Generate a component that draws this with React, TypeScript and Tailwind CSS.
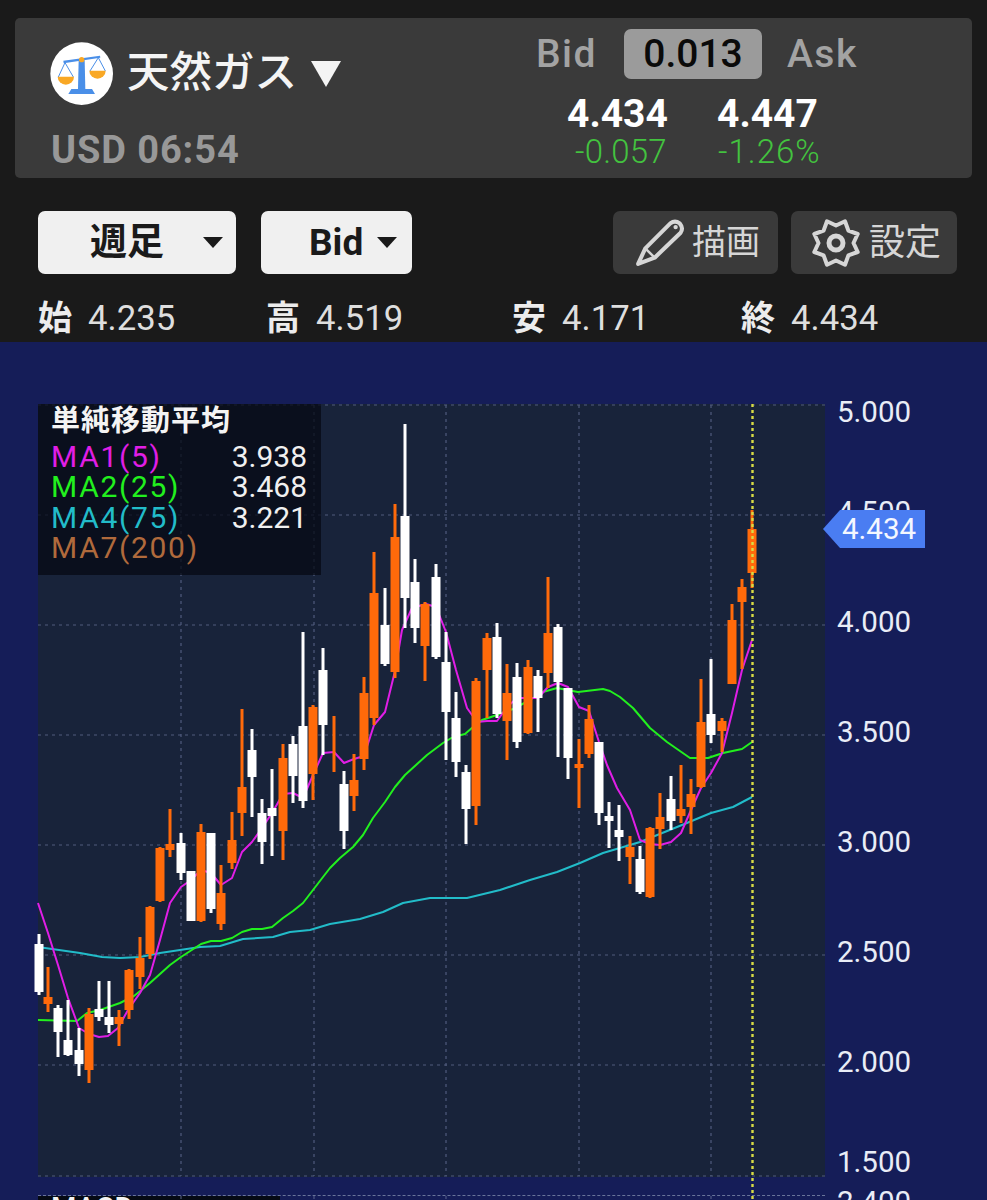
import * as React from 'react';

type Candle = [x: number, high: number, top: number, bottom: number, low: number, up: boolean];

// x, wick top, body top, body bottom, wick bottom, orange?
const candles: Candle[] = [
  [39, 934, 944, 992, 995, false],
  [48, 967, 997, 1004, 1012, true],
  [58, 1005, 1008, 1032, 1057, false],
  [68, 1000, 1040, 1055, 1056, false],
  [79, 1028, 1050, 1064, 1076, false],
  [89, 1008, 1014, 1070, 1083, true],
  [99, 981, 1009, 1017, 1021, false],
  [109, 981, 1017, 1025, 1033, false],
  [119, 1010, 1017, 1024, 1046, true],
  [129, 969, 970, 1010, 1019, true],
  [140, 937, 958, 977, 989, true],
  [150, 906, 907, 954, 959, true],
  [160, 847, 848, 901, 902, true],
  [170, 809, 844, 850, 857, true],
  [181, 833, 843, 873, 880, false],
  [191, 871, 871, 921, 921, false],
  [201, 824, 832, 921, 922, true],
  [211, 833, 833, 909, 913, false],
  [221, 865, 893, 924, 930, true],
  [232, 812, 840, 863, 869, true],
  [242, 709, 787, 813, 836, true],
  [252, 729, 750, 777, 817, false],
  [262, 799, 813, 842, 864, false],
  [272, 769, 808, 816, 856, false],
  [283, 744, 758, 831, 860, true],
  [293, 736, 744, 776, 803, false],
  [303, 632, 726, 801, 808, false],
  [313, 705, 707, 774, 800, true],
  [323, 648, 670, 725, 755, false],
  [334, 716, 716, 772, 772, true],
  [344, 771, 784, 831, 849, false],
  [354, 754, 780, 796, 811, true],
  [364, 677, 693, 759, 770, true],
  [374, 552, 593, 718, 725, true],
  [385, 588, 625, 664, 666, false],
  [395, 504, 537, 672, 678, true],
  [405, 424, 516, 598, 628, false],
  [415, 559, 582, 628, 643, false],
  [425, 602, 604, 646, 681, true],
  [436, 564, 577, 657, 659, false],
  [446, 632, 662, 712, 760, false],
  [456, 692, 718, 762, 777, false],
  [466, 765, 772, 809, 844, false],
  [476, 678, 681, 806, 825, true],
  [487, 633, 638, 670, 718, true],
  [497, 623, 637, 714, 718, false],
  [507, 664, 693, 721, 760, true],
  [517, 663, 677, 742, 748, false],
  [528, 660, 667, 733, 734, true],
  [538, 670, 676, 698, 732, false],
  [548, 577, 633, 673, 688, true],
  [558, 624, 627, 682, 757, false],
  [568, 688, 688, 758, 779, false],
  [579, 739, 764, 768, 808, true],
  [589, 705, 719, 754, 758, true],
  [599, 742, 742, 813, 825, false],
  [609, 802, 816, 821, 848, false],
  [619, 805, 830, 837, 861, false],
  [630, 836, 847, 857, 884, true],
  [640, 846, 859, 892, 894, false],
  [650, 827, 828, 897, 898, true],
  [660, 793, 817, 829, 849, true],
  [671, 776, 799, 821, 830, false],
  [681, 765, 809, 816, 823, true],
  [691, 779, 794, 807, 834, true],
  [701, 679, 722, 787, 788, true],
  [711, 659, 714, 735, 743, false],
  [722, 718, 721, 731, 752, true],
  [732, 604, 620, 684, 684, true],
  [742, 579, 587, 602, 669, true],
  [752, 510, 529, 573, 588, true],
];

const ma1 =
  '38,903 48,933 58,965 68,998 79,1028 89,1034 99,1037 108,1036 118,1028 128,1010 140,993 150,975 160,940 170,903 181,887 191,880 201,870 211,873 221,885 232,878 242,852 252,842 262,828 272,813 283,794 293,793 303,798 313,775 323,753 334,752 344,763 354,759 364,756 374,725 385,712 395,671 402,630 412,608 426,604 436,607 446,632 456,670 467,708 477,722 487,721 497,721 507,707 517,698 528,698 538,698 548,687 558,683 568,687 579,707 589,711 599,742 607,765 617,788 630,810 640,840 650,844 660,845 671,842 681,833 691,810 701,788 711,773 722,753 732,713 742,670 752,640';
const ma2 =
  '38,1020 77,1021 87,1013 100,1010 120,1003 134,996 150,983 170,965 181,957 201,944 211,941 221,941 232,938 242,932 252,929 262,929 272,927 283,918 293,911 303,903 313,890 323,877 330,868 340,858 353,847 363,835 373,818 385,802 395,787 405,775 427,755 443,743 453,737 465,734 473,727 482,720 497,715 513,709 530,700 543,692 557,688 578,692 603,689 610,691 620,697 633,708 650,728 667,742 690,758 708,758 723,753 742,749 752,742';
const ma4 =
  '38,947 80,953 102,957 120,958 140,957 160,953 180,950 200,947 220,946 243,939 273,937 290,932 310,930 330,924 360,919 383,912 403,903 430,898 467,898 500,890 530,880 557,872 580,863 603,853 640,842 682,825 711,813 733,807 752,797';

const gridY = [405, 515, 625, 735, 845, 955, 1065, 1176];
const gridX = [181, 314, 446, 579, 711];

const gearPoints = Array.from({ length: 16 }, (_, i) => {
  const r = i % 2 === 0 ? 23.5 : 17.5;
  const a = ((i * 22.5 + 22.5) * Math.PI) / 180;
  return `${(25 + r * Math.sin(a)).toFixed(1)},${(25 - r * Math.cos(a)).toFixed(1)}`;
}).join(' ');

function Caret() {
  return (
    <svg width="20" height="11" viewBox="0 0 20 11">
      <polygon points="0,0 20,0 10,11" fill="#1a1a1a" />
    </svg>
  );
}

function ScaleLogo() {
  return (
    <svg width="63" height="63" viewBox="150 125 189 189">
      <circle cx="245" cy="220" r="94" fill="#fff" />
      <g stroke="#4a8fe8" strokeWidth="3" fill="none">
        <path d="M195 187 L175 230 M195 187 L220 230 M295 172 L270 212 M295 172 L316 212" />
      </g>
      <path d="M190 181 L300 166 L301 172 L191 189 Z" fill="#4a8fe8" />
      <path d="M236 180 L254 180 L256 266 L234 266 Z" fill="#4a8fe8" />
      <path d="M214 266 L276 266 L285 281 L205 281 Z" fill="#4a8fe8" />
      <circle cx="245" cy="178" r="8" fill="#f9a825" />
      <path d="M173 229 L222 229 A24.5 24 0 0 1 173 229 Z" fill="#f9a825" />
      <path d="M268 211 L317 211 A24.5 24 0 0 1 268 211 Z" fill="#f9a825" />
    </svg>
  );
}

function PencilIcon() {
  return (
    <svg width="50" height="48" viewBox="22 22 160 152" fill="none" stroke="#d6d6d6" strokeWidth="13" strokeLinejoin="round">
      <path d="M32 165 L55 115 L135 35 Q150 24 165 35 Q178 50 168 65 L85 145 Z" />
      <path d="M55 115 L85 145" strokeWidth="8" />
      <circle cx="152" cy="47" r="7" fill="#d6d6d6" stroke="none" />
    </svg>
  );
}

function GearIcon() {
  return (
    <svg width="50" height="50" viewBox="0 0 50 50" fill="none" stroke="#d6d6d6" strokeLinejoin="round">
      <polygon points={gearPoints} strokeWidth="4" />
      <circle cx="25" cy="25" r="7" strokeWidth="5" />
    </svg>
  );
}

function Ohlc({ label, value, width }: { label: string; value: string; width: string }) {
  return (
    <div className={`flex items-center ${width}`}>
      <span className="w-[50px] text-[34px] font-bold text-[#ececec]">{label}</span>
      <span className="text-[34.7px] leading-none text-[#dedede]">{value}</span>
    </div>
  );
}

function Chart() {
  return (
    <svg
      width="787"
      height="773"
      viewBox="38 404 787 773"
      className="block overflow-visible"
    >
      <g stroke="#69749a" strokeWidth="1.2" strokeDasharray="3 4" opacity="0.7">
        {gridY.map((y) => (
          <line key={y} x1="38" x2="825" y1={y} y2={y} />
        ))}
        {gridX.map((x) => (
          <line key={x} x1={x} x2={x} y1="405" y2="1176" />
        ))}
        {gridX.map((x) => (
          <line key={x} x1={x} x2={x} y1="1196" y2="1200" />
        ))}
      </g>
      <polyline points={ma4} fill="none" stroke="#22bcc9" strokeWidth="2" strokeLinejoin="round" />
      <polyline points={ma2} fill="none" stroke="#22f01e" strokeWidth="2" strokeLinejoin="round" />
      <polyline points={ma1} fill="none" stroke="#e01ee6" strokeWidth="2" strokeLinejoin="round" />
      {candles.map(([x, high, top, bottom, low, up]) => {
        const fill = up ? '#ff6a0a' : '#ffffff';
        return (
          <g key={x} fill={fill}>
            <rect x={x - 1.5} y={high} width="3" height={low - high} />
            {x !== 334 && <rect x={x - 4.5} y={top} width="9" height={bottom - top} />}
          </g>
        );
      })}
      <line x1="752.5" x2="752.5" y1="404" y2="1200" stroke="#d8dc45" strokeWidth="2.4" strokeDasharray="3 3" />
    </svg>
  );
}

const axisRows = [
  { label: '5.000', cls: 'h-[100px]' },
  { label: '4.500', cls: 'h-[110px]' },
  { label: '4.000', cls: 'h-[110px]' },
  { label: '3.500', cls: 'h-[110px]' },
  { label: '3.000', cls: 'h-[110px]' },
  { label: '2.500', cls: 'h-[110px]' },
  { label: '2.000', cls: 'h-[100px]' },
  { label: '1.500', cls: 'h-[40px]' },
  { label: '2.400', cls: 'h-[30px]' },
];

export default function App() {
  return (
    <div className="w-[987px] h-[1200px] overflow-hidden bg-[#1a1a1a] font-['Roboto','Noto_Sans_CJK_JP',sans-serif] text-white">
      <div className="px-[15px] pt-[18px]">
        <div className="flex h-[160px] justify-between rounded-[5px] bg-[#3a3a3a] pl-[35px] pr-[100px]">
          <div>
            <div className="mt-[24px] flex h-[63px] items-center">
              <ScaleLogo />
              <span className="ml-[14px] text-[42.5px] font-medium leading-none text-[#f4f4f4]">天然ガス</span>
              <svg className="ml-[14px] mt-[1px]" width="30" height="26" viewBox="0 0 30 26">
                <polygon points="0,0 30,0 15,26" fill="#f4f4f4" />
              </svg>
            </div>
            <div className="mt-[25px] pl-[1px] text-[38px] font-bold leading-[40px] text-[#989898] tracking-[0.9px]">
              USD 06:54
            </div>
          </div>
          <div className="w-[336px]">
            <div className="mt-[11px] flex h-[50px] items-center text-[39px] font-medium leading-none text-[#a3a3a3]">
              <span className="w-[88px] shrink-0 tracking-[1.5px]">Bid</span>
              <span className="flex h-[50px] w-[138px] shrink-0 items-center justify-center rounded-[7px] bg-[#9b9b9b] text-[#0a0a0a]">
                0.013
              </span>
              <span className="ml-[25px] tracking-[1.5px]">Ask</span>
            </div>
            <div className="mt-[15px] flex pl-[31px] text-[39px] font-bold leading-[40px]">
              <span className="w-[150px]">4.434</span>
              <span>4.447</span>
            </div>
            <div className="flex pl-[39px] text-[33px] font-light leading-[36px] text-[#43c33f]">
              <span className="w-[143px] tracking-[0.2px]">-0.057</span>
              <span className="tracking-[1px]">-1.26%</span>
            </div>
          </div>
        </div>
      </div>

      <div className="mt-[33px] flex h-[63px] pl-[38px]">
        <button className="flex w-[198px] items-center rounded-[7px] bg-[#f0f0f0] pl-[52px] text-[37px] font-bold text-[#1a1a1a]">
          <span className="w-[113px] text-left">週足</span>
          <Caret />
        </button>
        <button className="ml-[25px] flex w-[151px] items-center rounded-[7px] bg-[#f0f0f0] pl-[48px] text-[37px] font-bold text-[#1a1a1a]">
          <span className="w-[68px] text-left">Bid</span>
          <Caret />
        </button>
        <button className="ml-[201px] flex w-[165px] items-center rounded-[7px] bg-[#3a3a3a] pl-[22px] text-[34px] text-[#d6d6d6]">
          <PencilIcon />
          <span className="ml-[7px]">描画</span>
        </button>
        <button className="ml-[13px] flex w-[166px] items-center rounded-[7px] bg-[#3a3a3a] pl-[20px] text-[36px] text-[#d6d6d6]">
          <GearIcon />
          <span className="ml-[8px]">設定</span>
        </button>
      </div>

      <div className="flex h-[68px] items-center pl-[38px] pt-[20px]">
        <Ohlc label="始" value="4.235" width="w-[228px]" />
        <Ohlc label="高" value="4.519" width="w-[246px]" />
        <Ohlc label="安" value="4.171" width="w-[229px]" />
        <Ohlc label="終" value="4.434" width="w-[200px]" />
      </div>

      <div className="flex h-[858px] bg-[#151d58] pl-[38px] pt-[62px]">
        <div className="w-[787px]">
          <div className="relative h-[773px] w-[787px] bg-[#18233a]">
            <Chart />
            <div className="absolute left-0 top-0 h-[171px] w-[283px] bg-[#050a14]/75 pl-[13px]">
              <div className="pt-[1px] text-[29px] font-bold leading-[32px] tracking-[1px] text-[#f4f4f4]">単純移動平均</div>
              <div className="mt-[5px] flex flex-col text-[30px] leading-[30.4px] tracking-[1.7px]">
                <div className="flex justify-between pr-[14px]">
                  <span className="text-[#e01ee6]">MA1(5)</span>
                  <span className="tracking-normal text-[#f0f0f0]">3.938</span>
                </div>
                <div className="flex justify-between pr-[14px]">
                  <span className="text-[#22f01e]">MA2(25)</span>
                  <span className="tracking-normal text-[#f0f0f0]">3.468</span>
                </div>
                <div className="flex justify-between pr-[14px]">
                  <span className="text-[#22bcc9]">MA4(75)</span>
                  <span className="tracking-normal text-[#f0f0f0]">3.221</span>
                </div>
                <span className="text-[#b06a3c]">MA7(200)</span>
              </div>
            </div>
          </div>
          <div className="mt-[18px] h-[10px] border-t border-dashed border-[#69749a]">
            <div className="h-[10px] w-[242px] bg-[#050a14] pl-[13px] text-[29px] font-medium leading-[24px] text-[#f4f4f4]">
              MACD
            </div>
          </div>
        </div>
        <div className="relative -mt-[7px] pl-[12px] text-[29.5px] leading-[30px] text-[#e9edf6]">
          {axisRows.map((row) => (
            <div key={row.label} className={row.cls}>
              {row.label}
            </div>
          ))}
          <div className="absolute left-[-2px] top-[113px] flex h-[38px] items-center">
            <div className="h-0 w-0 border-y-[19px] border-r-[17px] border-y-transparent border-r-[#4a7df2]" />
            <div className="flex h-[38px] w-[85px] items-center bg-[#4a7df2] pl-[2px] text-[#f4f7ff]">4.434</div>
          </div>
        </div>
      </div>
    </div>
  );
}
